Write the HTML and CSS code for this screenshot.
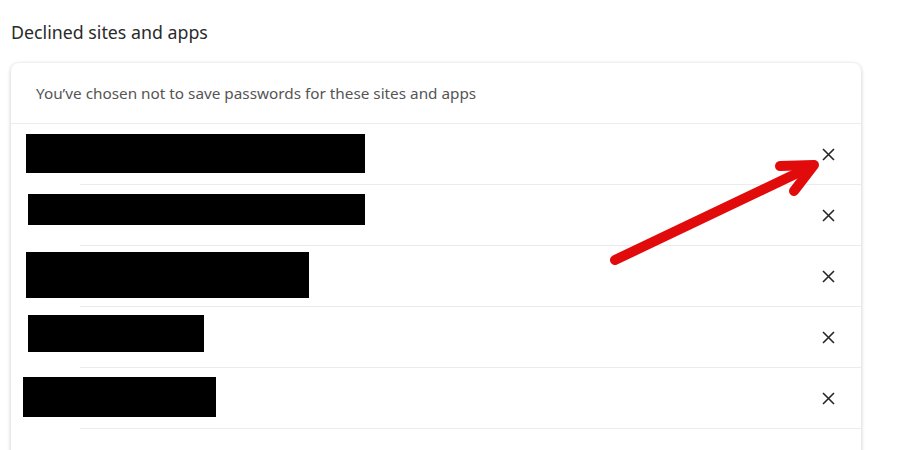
FILE: index.html
```html
<!DOCTYPE html>
<html lang="en">
<head>
    <meta charset="UTF-8">
    <title>Declined sites and apps</title>
    <link rel="stylesheet" href="styles.css">
</head>
<body>
    <div class="page">
        <h2 class="title">Declined sites and apps</h2>
        <div class="card">
            <div class="card-head">You’ve chosen not to save passwords for these sites and apps</div>
            <div class="row">
                <div class="hidden r1"></div>
                <button class="remove" title="Remove"><svg width="13" height="13" viewBox="0 0 13 13"><path d="M1 1L12 12M12 1L1 12" stroke="#262626" stroke-width="1.6" fill="none"/></svg></button>
            </div>
            <div class="row">
                <div class="hidden r2"></div>
                <button class="remove" title="Remove"><svg width="13" height="13" viewBox="0 0 13 13"><path d="M1 1L12 12M12 1L1 12" stroke="#262626" stroke-width="1.6" fill="none"/></svg></button>
            </div>
            <div class="row">
                <div class="hidden r3"></div>
                <button class="remove" title="Remove"><svg width="13" height="13" viewBox="0 0 13 13"><path d="M1 1L12 12M12 1L1 12" stroke="#262626" stroke-width="1.6" fill="none"/></svg></button>
            </div>
            <div class="row">
                <div class="hidden r4"></div>
                <button class="remove" title="Remove"><svg width="13" height="13" viewBox="0 0 13 13"><path d="M1 1L12 12M12 1L1 12" stroke="#262626" stroke-width="1.6" fill="none"/></svg></button>
            </div>
            <div class="row">
                <div class="hidden r5"></div>
                <button class="remove" title="Remove"><svg width="13" height="13" viewBox="0 0 13 13"><path d="M1 1L12 12M12 1L1 12" stroke="#262626" stroke-width="1.6" fill="none"/></svg></button>
            </div>
            <div class="row"></div>
        </div>
    </div>
    <svg class="arrow" width="900" height="450" viewBox="0 0 900 450">
        <path d="M615 260L808 168" stroke="#e20b0b" stroke-width="10" stroke-linecap="round" fill="none"/>
        <path d="M780 166L814 165L794 191" stroke="#e20b0b" stroke-width="10" stroke-linecap="round" stroke-linejoin="round" fill="none"/>
    </svg>
</body>
</html>
```

FILE: styles.css
```css
body {
    margin: 0;
    background: #fff;
    font-family: "Noto Sans", "Open Sans", sans-serif;
    color: #222;
    height: 450px;
    overflow: hidden;
}
.page {
    padding: 20px 39px 0 11px;
}
.title {
    margin: 0 0 19px 0;
    font-size: 17.8px;
    line-height: 24px;
    font-weight: 400;
    color: #2a2a2a;
}
.card {
    background: #fff;
    border-radius: 8px;
    box-shadow: 0 1px 4px rgba(0,0,0,0.22);
}
.card-head {
    height: 61px;
    padding-left: 25px;
    display: flex;
    align-items: center;
    font-size: 15.3px;
    color: #555;
    border-bottom: 1px solid #ececec;
    box-sizing: border-box;
}
.row {
    height: 61px;
    display: flex;
    align-items: flex-start;
    position: relative;
    padding: 0 26px 0 15px;
    box-sizing: border-box;
}
.row::after {
    content: "";
    position: absolute;
    left: 69px;
    right: 0;
    bottom: 0;
    border-bottom: 1px solid #ececec;
}
.row:last-child::after {
    display: none;
}
.hidden {
    background: #000;
    position: relative;
    z-index: 1;
}
.r1 { width: 339px; height: 39px; margin-top: 10px; }
.r2 { width: 337px; height: 31px; margin-left: 2px; margin-top: 9px; }
.r3 { width: 283px; height: 46px; margin-top: 6px; }
.r4 { width: 176px; height: 37px; margin-left: 2px; margin-top: 8px; }
.r5 { width: 193px; height: 40px; margin-left: -3px; margin-top: 9px; }
.remove {
    margin-left: auto;
    align-self: center;
    background: none;
    border: none;
    padding: 0;
    width: 13px;
    height: 13px;
    display: flex;
    cursor: pointer;
}
.arrow {
    position: absolute;
    left: 0;
    top: 0;
    pointer-events: none;
}
```
